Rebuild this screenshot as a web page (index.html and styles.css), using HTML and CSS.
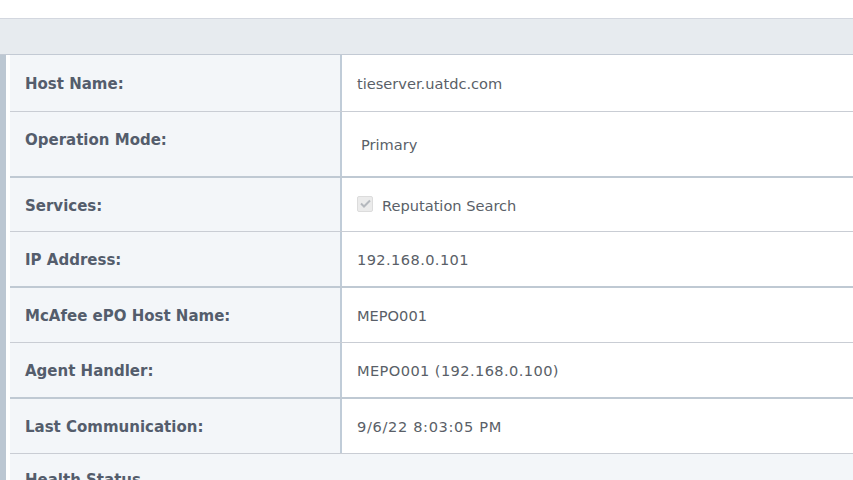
FILE: index.html
```html
<!DOCTYPE html>
<html>
<head>
<meta charset="utf-8">
<link rel="stylesheet" href="styles.css">
</head>
<body>
<div class="topspace"></div>
<div class="band"></div>
<div class="main">
  <div class="stripe"></div>
  <div class="table">
    <div class="row r-thin h56">
      <div class="label">Host Name:</div>
      <div class="value">tieserver.uatdc.com</div>
    </div>
    <div class="row r-thick h64">
      <div class="label top">Operation Mode:</div>
      <div class="value select">Primary</div>
    </div>
    <div class="row r-thin h53">
      <div class="label">Services:</div>
      <div class="value"><span class="check"><svg width="11" height="9" viewBox="0 0 11 9"><path d="M1 4.5 L4 7.5 L10 1.5" fill="none" stroke="#b4b8bd" stroke-width="2"/></svg></span>Reputation Search</div>
    </div>
    <div class="row r-thick h54">
      <div class="label">IP Address:</div>
      <div class="value num">192.168.0.101</div>
    </div>
    <div class="row r-thin h54">
      <div class="label">McAfee ePO Host Name:</div>
      <div class="value">MEPO001</div>
    </div>
    <div class="row r-thick h54">
      <div class="label">Agent Handler:</div>
      <div class="value num">MEPO001 (192.168.0.100)</div>
    </div>
    <div class="row r-thin h54">
      <div class="label">Last Communication:</div>
      <div class="value num wide">9/6/22 8:03:05 PM</div>
    </div>
    <div class="section">Health Status</div>
  </div>
</div>
</body>
</html>
```
FILE: styles.css
```css
html, body {
  margin: 0;
  padding: 0;
  background: #ffffff;
  overflow: hidden;
}
body {
  width: 853px;
  height: 480px;
  font-family: "DejaVu Sans", Verdana, sans-serif;
}
.topspace {
  height: 18px;
  background: #ffffff;
}
.band {
  height: 35px;
  background: #e7ebef;
  border-top: 1px solid #d3d7df;
  border-bottom: 1px solid #c3cad4;
}
.main {
  display: flex;
  gap: 4px;
}
.stripe {
  width: 6px;
  flex: none;
  background: #bcc7d2;
}
.table {
  flex: 1;
  display: flex;
  flex-direction: column;
}
.row {
  display: grid;
  grid-template-columns: 330px 1fr;
}
.r-thin { border-bottom: 1px solid #c9cdd4; }
.r-thick { border-bottom: 2px solid #bfc9d3; }
.h56 { height: 56px; }
.h64 { height: 64px; }
.h53 { height: 53px; }
.h54 { height: 54px; }
.label {
  background: #f3f6f9;
  color: #545d6c;
  font-weight: bold;
  font-size: 15px;
  padding-left: 15px;
  padding-top: 2px;
  display: flex;
  align-items: center;
}
.label.top {
  align-items: flex-start;
  padding-top: 19px;
}
.value {
  background: #ffffff;
  border-left: 2px solid #c0ccd8;
  color: #5a5f68;
  font-size: 14.6px;
  padding-left: 15px;
  padding-top: 1px;
  display: flex;
  align-items: center;
}
.value.num {
  letter-spacing: 0.4px;
}
.value.wide {
  letter-spacing: 0.65px;
}
.value.select {
  padding-left: 19px;
  padding-top: 1px;
}
.check {
  width: 16px;
  height: 16px;
  box-sizing: border-box;
  background: #ebebeb;
  border: 1px solid #dcdcdc;
  border-radius: 2px;
  display: inline-flex;
  align-items: center;
  justify-content: center;
  margin-right: 9px;
  margin-top: -3px;
}
.section {
  background: #f3f6f9;
  color: #545d6c;
  font-weight: bold;
  font-size: 15px;
  padding: 17px 0 0 15px;
  height: 40px;
}
```
